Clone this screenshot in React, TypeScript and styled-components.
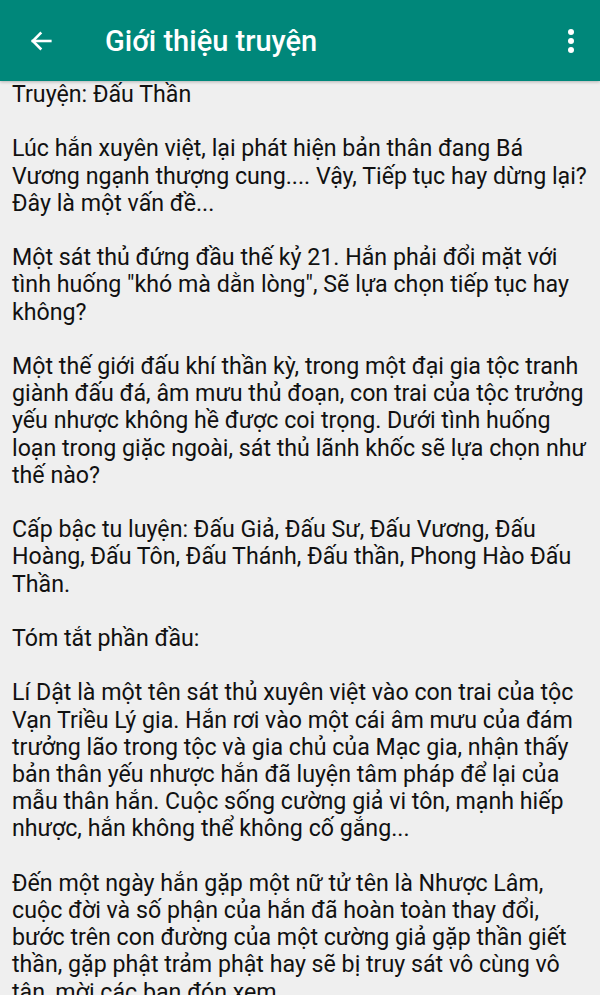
import React from "react";
import styled, { createGlobalStyle } from "styled-components";

const GlobalStyle = createGlobalStyle`
  html, body {
    margin: 0;
    padding: 0;
    background: #efefef;
  }
  body {
    font-family: Roboto, "Noto Sans", sans-serif;
  }
`;

const paragraphs: string[][] = [
  ["Truyện: Đấu Thần"],
  [
    "Lúc hắn xuyên việt, lại phát hiện bản thân đang Bá",
    "Vương ngạnh thượng cung.... Vậy, Tiếp tục hay dừng lại?",
    "Đây là một vấn đề...",
  ],
  [
    "Một sát thủ đứng đầu thế kỷ 21. Hắn phải đổi mặt với",
    'tình huống "khó mà dằn lòng", Sẽ lựa chọn tiếp tục hay',
    "không?",
  ],
  [
    "Một thế giới đấu khí thần kỳ, trong một đại gia tộc tranh",
    "giành đấu đá, âm mưu thủ đoạn, con trai của tộc trưởng",
    "yếu nhược không hề được coi trọng. Dưới tình huống",
    "loạn trong giặc ngoài, sát thủ lãnh khốc sẽ lựa chọn như",
    "thế nào?",
  ],
  [
    "Cấp bậc tu luyện: Đấu Giả, Đấu Sư, Đấu Vương, Đấu",
    "Hoàng, Đấu Tôn, Đấu Thánh, Đấu thần, Phong Hào Đấu",
    "Thần.",
  ],
  ["Tóm tắt phần đầu:"],
  [
    "Lí Dật là một tên sát thủ xuyên việt vào con trai của tộc",
    "Vạn Triều Lý gia. Hắn rơi vào một cái âm mưu của đám",
    "trưởng lão trong tộc và gia chủ của Mạc gia, nhận thấy",
    "bản thân yếu nhược hắn đã luyện tâm pháp để lại của",
    "mẫu thân hắn. Cuộc sống cường giả vi tôn, mạnh hiếp",
    "nhược, hắn không thể không cố gắng...",
  ],
  [
    "Đến một ngày hắn gặp một nữ tử tên là Nhược Lâm,",
    "cuộc đời và số phận của hắn đã hoàn toàn thay đổi,",
    "bước trên con đường của một cường giả gặp thần giết",
    "thần, gặp phật trảm phật hay sẽ bị truy sát vô cùng vô",
    "tận, mời các bạn đón xem.",
  ],
];

const Screen = styled.div`
  width: 600px;
  height: 995px;
  overflow: hidden;
  background: #efefef;
  display: flex;
  flex-direction: column;
`;

const AppBar = styled.header`
  height: 81px;
  flex-shrink: 0;
  background: #00877a;
  display: flex;
  align-items: center;
  padding: 0 14px 0 26px;
  box-shadow: 0 1px 3px rgba(0, 0, 0, 0.25);
  position: relative;
  z-index: 1;
`;

const IconButton = styled.button`
  width: 30px;
  height: 30px;
  padding: 0;
  border: 0;
  background: transparent;
  display: flex;
  align-items: center;
  justify-content: center;
  color: #fff;
`;

const Title = styled.h1`
  flex: 1;
  margin: 0 0 0 49px;
  font-size: 29px;
  font-weight: 500;
  color: #fff;
`;

const Content = styled.main`
  padding: 0 12px;
  color: #111;
  font-size: 23.2px;
  line-height: 27.2px;
`;

const Paragraph = styled.p`
  margin: 0 0 27.2px;
`;

const Line = styled.span`
  display: block;
  white-space: nowrap;
`;

export default function App() {
  return (
    <Screen>
      <GlobalStyle />
      <AppBar>
        <IconButton aria-label="Back">
          <svg width="28" height="28" viewBox="0 0 24 24" fill="none" stroke="#fff" strokeWidth="2.2" strokeLinecap="square">
            <path d="M20 12H5" />
            <path d="M11.5 5.5L5 12l6.5 6.5" />
          </svg>
        </IconButton>
        <Title>Giới thiệu truyện</Title>
        <IconButton aria-label="More">
          <svg width="8" height="26" viewBox="0 0 8 26" fill="#fff">
            <circle cx="4" cy="4" r="3" />
            <circle cx="4" cy="13" r="3" />
            <circle cx="4" cy="22" r="3" />
          </svg>
        </IconButton>
      </AppBar>
      <Content>
        {paragraphs.map((p, i) => (
          <Paragraph key={i}>
            {p.map((l, j) => (
              <Line key={j}>{l}</Line>
            ))}
          </Paragraph>
        ))}
      </Content>
    </Screen>
  );
}
